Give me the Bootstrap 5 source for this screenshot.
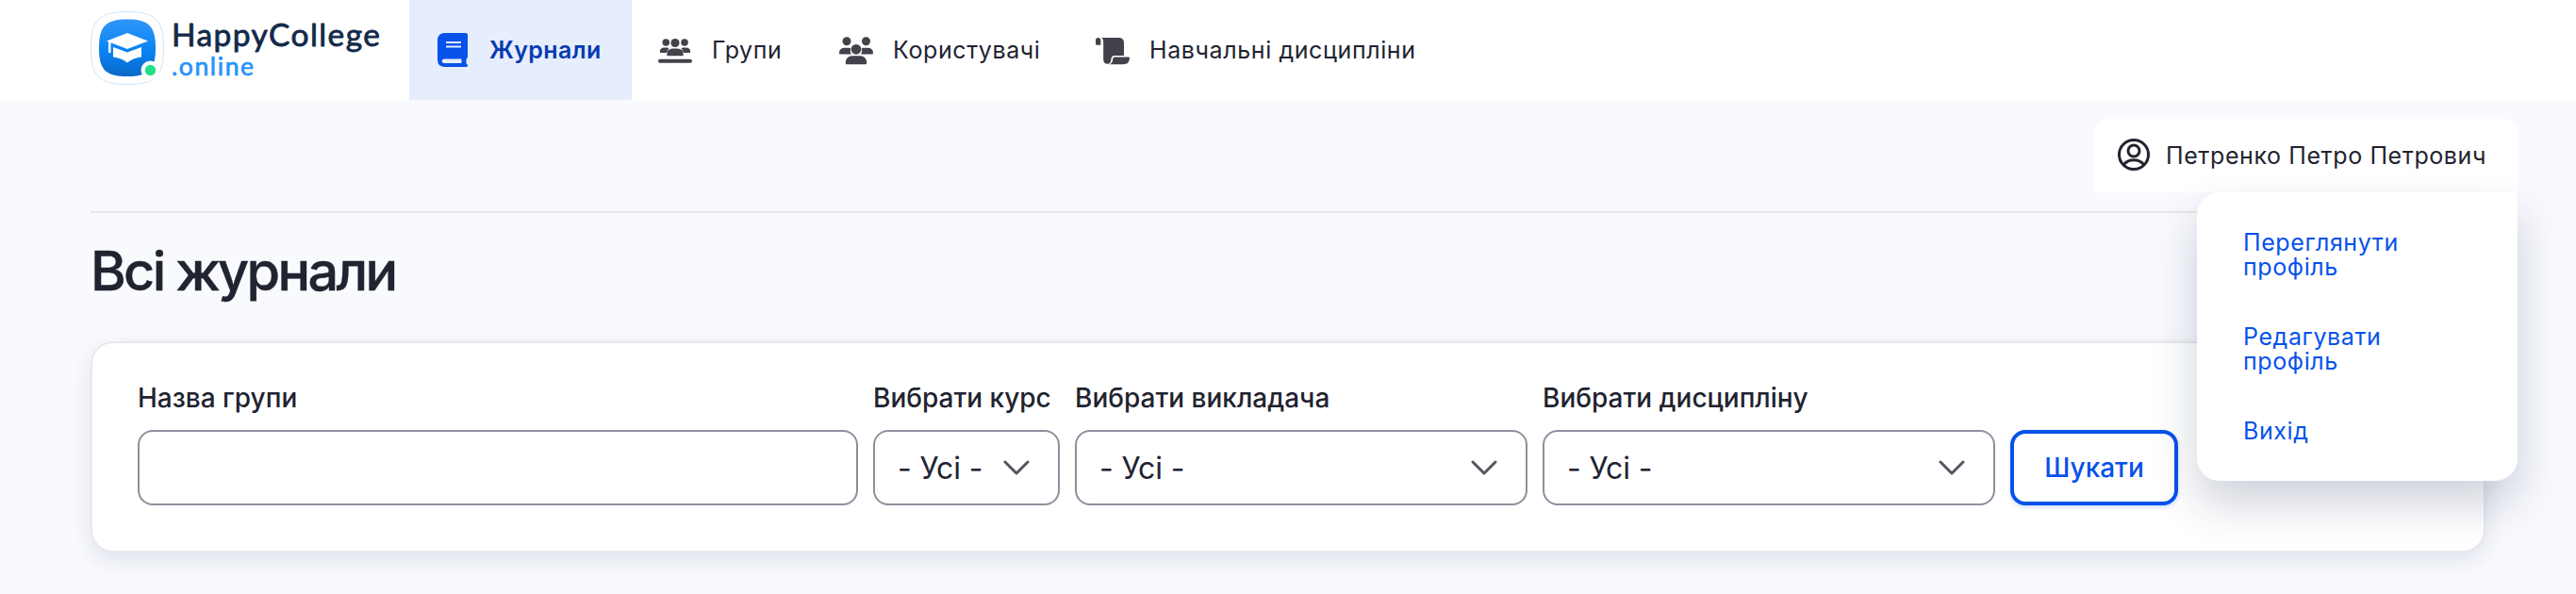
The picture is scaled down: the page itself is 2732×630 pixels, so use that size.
<!DOCTYPE html>
<html lang="uk">
<head>
<meta charset="utf-8">
<title>Всі журнали</title>
<link rel="stylesheet" href="https://cdn.jsdelivr.net/npm/bootstrap@5.3.0/dist/css/bootstrap.min.css">
<style>
body{background:#f9fafe;color:#212330;font-family:Inter,"Noto Sans",sans-serif;font-size:25px;letter-spacing:.6px;min-height:630px}
.topbar{height:106px;padding-left:96px}
.logo-svg{width:338px;height:106px;letter-spacing:0}
.topbar .nav-link{height:106px;padding:0 0 0 28px;color:#212330;font-size:25px;gap:21px;white-space:nowrap}
.topbar .nav-link span{padding-top:1px}
.topbar .nav-link svg{width:36px;height:36px;color:#41424a}
.topbar .nav-link.active{background:#e6edfc;color:#063bb0;font-weight:600;letter-spacing:.4px}
.topbar .nav-link.active svg{color:#0652ea}
.nav-w1{width:236px}.nav-w2{width:192px}.nav-w3{width:272px}
.page{padding:0 96px 46px}
.userrow{height:120px;border-bottom:2px solid #e5e6e9;padding-top:20px}
.userbox{width:448px;height:78px;margin-right:-34px;border-radius:12px 12px 0 0;padding-left:24px;z-index:5}
.userbox>svg{margin-top:-2px}
.userbox>span{padding:1px 0 0 17px}
.usermenu{position:absolute;top:78px;right:0;width:340px;height:306px;border-radius:24px 0 24px 24px;padding:16px 0;box-shadow:0 24px 48px rgba(10,30,70,.2)}
.usermenu a{display:block;padding:24px 90px 24px 49px;line-height:26px;color:#0652ea;text-decoration:none}
.title-main{font-size:57.600px;font-weight:500;letter-spacing:-2.700px;line-height:70px;margin:26px 0 0;-webkit-text-stroke:.4px #212330}
.filter{margin-top:40px;height:224px;border:2px solid #e8e9ea;border-radius:24px;padding:0 48px;box-shadow:0 8px 22px rgba(10,40,80,.11);letter-spacing:0}
.filter label{font-size:28px;font-weight:500;line-height:34px;margin:41px 0 17px;white-space:nowrap}
.filter .form-control,.filter .form-select{height:80px;border:2px solid #8d909e;border-radius:16px;font-size:32px;letter-spacing:-.1px;color:#212330;background-color:#fff;padding:1px 24px 0}
.filter .form-select{background-image:url("data:image/svg+xml,%3Csvg xmlns='http://www.w3.org/2000/svg' viewBox='0 0 28 16'%3E%3Cpath d='M2 2l12 12L26 2' fill='none' stroke='%23555560' stroke-width='3' stroke-linecap='round' stroke-linejoin='round'/%3E%3C/svg%3E");background-repeat:no-repeat;background-size:28px 16px;background-position:right 30px center}
.find-wrap{padding-top:92px}
.btn-find{width:178px;height:80px;border:4px solid #0652ea;border-radius:16px;color:#0652ea;font-size:28px;font-weight:500;box-shadow:0 2px 4px rgba(6,82,234,.2)}
.w-a{width:764px}.w-b{width:198px}.w-c{width:480px}
</style>
</head>
<body>
<header class="topbar bg-white d-flex">
  <a href="#" aria-label="HappyCollege.online">
  <svg class="logo-svg d-block" viewBox="96 0 338 106">
    <defs><linearGradient id="lg" x2="0" y2="1"><stop stop-color="#3096f8"/><stop offset=".55" stop-color="#0a82f4"/><stop offset="1" stop-color="#0b6ac8"/></linearGradient></defs>
    <path d="M135 12.500C165 12.500 173.500 21 173.500 51S165 89.500 135 89.500 96.500 81 96.500 51 105 12.500 135 12.500z" fill="#fff" stroke="#cfe4fa"/>
    <path d="M135 20.500C158 20.500 165 28 165 51S158 81 135 81 105 74 105 51 112 20.500 135 20.500z" fill="url(#lg)"/>
    <path d="M135 35l22 8.500L135 52l-22-8.500z" fill="#fff"/>
    <path d="M115 44h2.500v12H115zM120 50l15 5.500 15-5.500v10.500q-9 1-15 6-6-5-15-6z" fill="#fff"/>
    <circle cx="159.500" cy="74.500" r="10" fill="#fff"/><circle cx="159.500" cy="74.500" r="5.700" fill="#25df86"/>
    <g font-family="Lato, sans-serif" font-weight="400" stroke-linejoin="round">
    <text x="182" y="48.700" font-size="33.500" fill="#12294a" stroke="#12294a" stroke-width=".8" textLength="221">HappyCollege</text>
    <text x="182" y="80.300" font-size="26.500" fill="#2793fa" stroke="#2793fa" stroke-width=".7" textLength="87">.online</text>
    </g>
  </svg>
  </a>
  <nav class="nav flex-nowrap">
    <a class="nav-link active nav-w1 d-flex align-items-center" href="#"><svg viewBox="-2 0 36 36" fill="currentColor"><path d="M8 0h22a2 2 0 0 1 2 2v23q0 2-1.500 2.500v5Q32 33 32 34.500T30 36H8q-8 0-8-8V8Q0 0 8 0zM7 27.500a2.200 2.200 0 0 0 0 4.500h18.500v-4.500zM9 9v2h16V9zm0 4.500v2h16v-2z" fill-rule="evenodd"/></svg><span>Журнали</span></a>
    <a class="nav-link nav-w2 d-flex align-items-center" href="#"><svg viewBox="0 0 36 36" fill="currentColor"><circle cx="8.300" cy="10" r="3.800"/><circle cx="28" cy="10" r="3.800"/><circle cx="18" cy="10.500" r="4.600"/><path d="M6.500 15.500h3q1 0 2 .5-1.500 2-1.500 3.500L8.500 21H3q-1.200 0-1.200-1 0-4.500 4.700-4.500zM29.500 15.500h-3q-1 0-2 .5 1.500 2 1.500 3.500l1.500 1.500H33q1.200 0 1.200-1 0-4.500-4.700-4.500zM15.500 16.500h5q6 0 6.300 6.500 0 1.300-1.300 1.300h-15Q9.200 24.300 9.200 23q.3-6.500 6.300-6.500z"/><rect y="27.700" width="36" height="4" rx="2"/></svg><span>Групи</span></a>
    <a class="nav-link nav-w3 d-flex align-items-center" href="#"><svg viewBox="0 0 36 36" fill="currentColor"><circle cx="8" cy="8.700" r="4.500"/><circle cx="28.500" cy="8.700" r="4.500"/><circle cx="18" cy="17.300" r="5.400"/><path d="M6 15.800h4.500q.8 0 1.500.4-.8 3.600 1 6.300H1.200Q0 22.500 0 21.300q0-5.500 6-5.500zM30 15.800h-4.500q-.8 0-1.500.4.800 3.600-1 6.300h11.800q1.200 0 1.200-1.200 0-5.500-6-5.500zM14 24.300h8q7 0 7.200 7.700 0 1.300-1.300 1.300H8.100q-1.300 0-1.300-1.300.2-7.700 7.200-7.700z"/></svg><span>Користувачі</span></a>
    <a class="nav-link d-flex align-items-center" href="#"><svg viewBox="0 0 36 36" fill="currentColor"><path d="M2.700 5q2.700 0 2.700 3v4.700H1.200Q0 12.700 0 11.500V8q0-3 2.700-3zM6.400 5H24.500q5.500 0 5.500 5.500V24H19.500Q17 24 16.500 27.500 16 32.800 12.500 32.800 8.200 32.800 8.200 28V9.500Q8.200 6.500 6.400 5zM20 25.500h15q1 0 1 1 0 6.700-7 6.700H14.500q3.500-1 3.800-5.700.2-2 1.700-2z"/></svg><span>Навчальні дисципліни</span></a>
  </nav>
</header>
<main class="page">
  <div class="userrow d-flex justify-content-end">
    <div class="userbox bg-white position-relative d-flex align-items-center">
      <svg width="34" height="34" viewBox="0 0 34 34" fill="none" stroke="#212330" stroke-width="3"><circle cx="17" cy="17" r="15.500"/><circle cx="17" cy="13" r="6"/><path d="M6.500 27.500C11 21 23 21 27.500 27.500"/></svg>
      <span class="text-nowrap">Петренко Петро Петрович</span>
      <div class="usermenu bg-white"><a href="#">Переглянути профіль</a><a href="#">Редагувати профіль</a><a href="#">Вихід</a></div>
    </div>
  </div>
  <h1 class="title-main">Всі журнали</h1>
  <form class="filter bg-white d-flex gap-3">
    <div class="w-a"><label for="g">Назва групи</label><input id="g" class="form-control"></div>
    <div class="w-b"><label for="k">Вибрати курс</label><select id="k" class="form-select"><option>- Усі -</option></select></div>
    <div class="w-c"><label for="v">Вибрати викладача</label><select id="v" class="form-select"><option>- Усі -</option></select></div>
    <div class="w-c"><label for="d">Вибрати дисципліну</label><select id="d" class="form-select"><option>- Усі -</option></select></div>
    <div class="find-wrap"><button type="button" class="btn btn-find bg-white">Шукати</button></div>
  </form>
</main>
<script src="https://cdn.jsdelivr.net/npm/bootstrap@5.3.0/dist/js/bootstrap.bundle.min.js"></script>
</body>
</html>
